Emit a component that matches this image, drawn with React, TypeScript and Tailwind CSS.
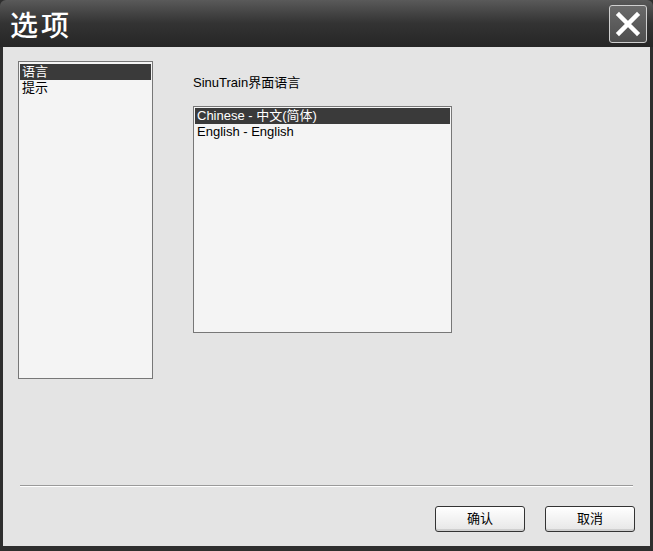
import React from "react"

const cjk = { fontFamily: '"Liberation Sans", "Noto Sans CJK SC", sans-serif' }

const ListItem: React.FC<{ label: string; selected?: boolean }> = ({ label, selected }) => (
  <div
    className={`h-[16px] leading-[16px] px-[2px] text-[13px] overflow-hidden ${
      selected ? "bg-[#3a3a3a] text-white" : "text-black"
    }`}
  >
    {label}
  </div>
)

const Button: React.FC<{ label: string }> = ({ label }) => (
  <button className="w-[90px] h-[26px] rounded-[3px] border border-[#333] bg-gradient-to-b from-white to-[#e6e6e6] text-[13px] text-black shadow-[inset_0_-2px_0_#cfcfcf]">
    {label}
  </button>
)

export default function App() {
  return (
    <div className="w-[653px] h-[551px] bg-[#2e2e2e] flex flex-col" style={cjk}>
      {/* title bar */}
      <div className="h-[47px] shrink-0 flex items-center justify-between pl-[10px] pr-[6px] bg-gradient-to-b from-[#5a5a5a] via-[#333] to-[#262626] rounded-t-[6px]">
        <span
          className="text-white text-[28px] font-medium tracking-[3px] leading-none"
          style={{ fontFamily: '"Noto Sans CJK SC", sans-serif' }}
        >
          选项
        </span>
        <div className="w-[38px] h-[38px] rounded-[3px] border border-[#cfcfcf] bg-gradient-to-b from-[#6a6a6a] to-[#4e4e4e] flex items-center justify-center">
          <svg width="26" height="26" viewBox="0 0 26 26">
            <path d="M4 4 L22 22 M22 4 L4 22" stroke="white" strokeWidth="4.5" strokeLinecap="square" />
          </svg>
        </div>
      </div>

      {/* body */}
      <div className="flex-1 mx-[3px] mb-[5px] bg-[#e4e4e4] flex flex-col">
        <div className="flex flex-1 pt-[14px]">
          <div className="ml-[15px] w-[135px] h-[318px] border border-[#777] bg-[#f4f4f4] pt-[2px] px-[1px]">
            <ListItem label="语言" selected />
            <ListItem label="提示" />
          </div>
          <div className="ml-[40px] flex flex-col">
            <div className="mt-[14px] text-[13px] text-black leading-[16px]">SinuTrain界面语言</div>
            <div className="mt-[15px] w-[259px] h-[227px] border border-[#777] bg-[#f4f4f4] pt-[1px] px-[1px]">
              <ListItem label="Chinese - 中文(简体)" selected />
              <ListItem label="English - English" />
            </div>
          </div>
        </div>
        <div className="mx-[17px] h-[2px] border-t border-[#9a9a9a] border-b-white border-b" />
        <div className="flex justify-end gap-[20px] pr-[15px] pt-[19px] pb-[14px]">
          <Button label="确认" />
          <Button label="取消" />
        </div>
      </div>
    </div>
  )
}
